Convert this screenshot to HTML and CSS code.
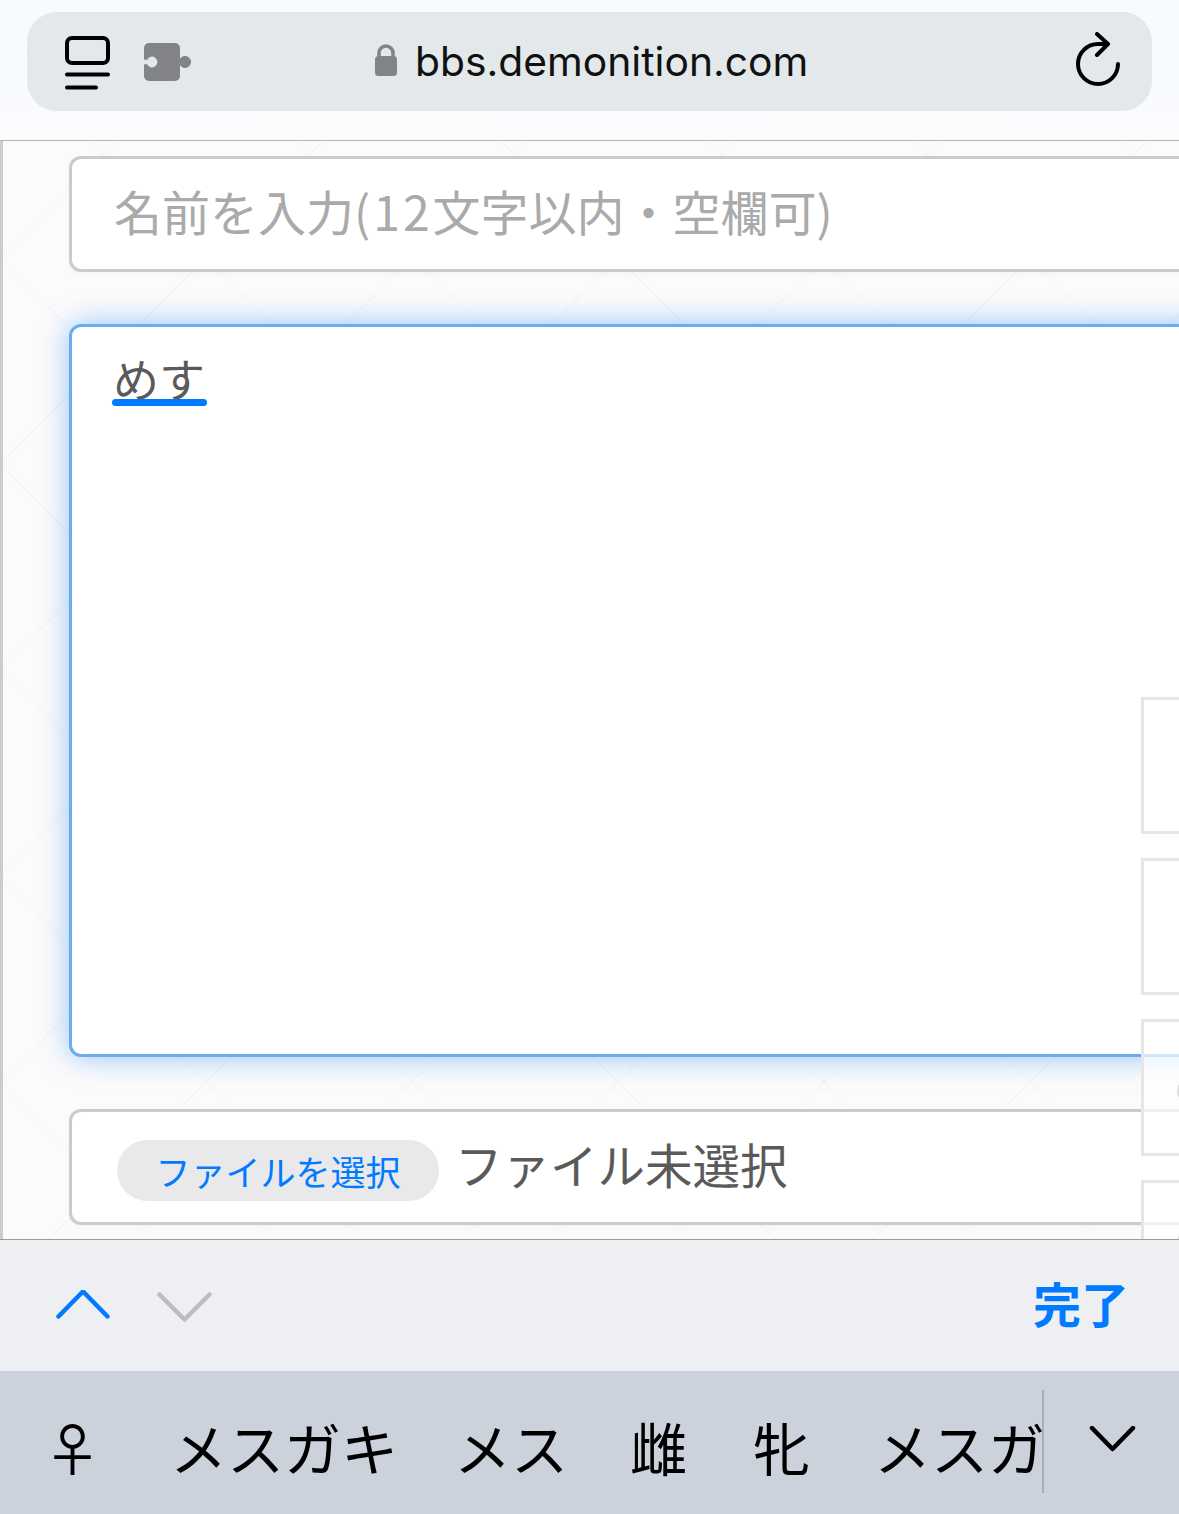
FILE: index.html
```html
<!DOCTYPE html>
<html lang="ja">

<head>
    <meta charset="UTF-8">
    <meta name="viewport" content="width=device-width, initial-scale=1.0">
    <title>bbs.demonition.com</title>
    <link rel="stylesheet" href="styles.css">
</head>

<body>
    <header class="browser-bar">
        <div class="address-pill">
            <svg class="icon-tabs" width="45" height="54" viewBox="0 0 45 54">
                <rect x="2" y="2" width="41" height="25" rx="5" fill="none" stroke="#000" stroke-width="4" />
                <path d="M2 38.500H43M2 51.500H31" fill="none" stroke="#000" stroke-width="4" stroke-linecap="round" />
            </svg>
            <svg class="icon-puzzle" width="48" height="38" viewBox="0 0 48 38">
                <path fill="#828387" d="M5 0H31a5 5 0 0 1 5 5V15.700a6 6 0 1 1 0 6.600V33a5 5 0 0 1-5 5H5a5 5 0 0 1-5-5V21.500L3 21a5.400 5.400 0 1 0 0-4L0 16.500V5a5 5 0 0 1 5-5Z" />
            </svg>
            <div class="address">
                <svg class="icon-lock" width="24" height="33" viewBox="0 0 24 33">
                    <path d="M5 15V10a7 7 0 0 1 14 0v5" fill="none" stroke="#828387" stroke-width="3.500" />
                    <rect x="1" y="13" width="22" height="20" rx="3.500" fill="#828387" />
                </svg>
                <span class="url">bbs.demonition.com</span>
            </div>
            <svg class="icon-reload" width="48" height="56" viewBox="0 0 48 56">
                <path d="M45 32a20 20 0 1 1-20-20h9" fill="none" stroke="#000" stroke-width="4" stroke-linecap="round" />
                <path d="M24 2 35 12 24 23" fill="none" stroke="#000" stroke-width="4" stroke-linecap="round" stroke-linejoin="round" />
            </svg>
        </div>
    </header>

    <main class="page">
        <div class="field name-field">
            <span class="placeholder">名前を入力<span class="digits">(12</span>文字以内・空欄可)</span>
        </div>
        <div class="field message-field">
            <span class="composing">めす</span>
        </div>
        <div class="field file-field">
            <span class="file-btn">ファイルを選択</span>
            <span class="file-name">ファイル未選択</span>
        </div>

        <div class="side-thumb thumb-1"></div>
        <div class="side-thumb thumb-2"></div>
        <div class="side-thumb thumb-3"></div>
        <div class="side-thumb thumb-4"></div>
    </main>

    <div class="form-bar">
        <div class="form-arrows">
            <svg width="56" height="32" viewBox="0 0 56 32">
                <path d="M3.500 26.500 28 1.500 52.500 26.500" fill="none" stroke="#007aff" stroke-width="4.500" stroke-linecap="round" stroke-linejoin="round" />
            </svg>
            <svg width="56" height="32" viewBox="0 0 56 32">
                <path d="M2.500 4.500 27.500 29.500 52.500 4.500" fill="none" stroke="#bdbdbd" stroke-width="4.500" stroke-linecap="round" stroke-linejoin="round" />
            </svg>
        </div>
        <span class="done">完了</span>
    </div>

    <div class="candidates-bar">
        <div class="candidates">
            <span class="candidate symbol">♀</span>
            <span class="candidate kana-first">メスガキ</span>
            <span class="candidate kana-short">メス</span>
            <span class="candidate">雌</span>
            <span class="candidate kanji-second">牝</span>
            <span class="candidate kana-last">メスガ</span>
        </div>
        <div class="expand">
            <svg width="48" height="26" viewBox="0 0 48 26">
                <path d="M4 2 24.500 23 45 2" fill="none" stroke="#000" stroke-width="4.500" stroke-linecap="round" stroke-linejoin="round" />
            </svg>
        </div>
    </div>
</body>

</html>
```

FILE: styles.css
```css
body {
    margin: 0;
    width: 1179px;
    height: 1514px;
    overflow: hidden;
    display: flex;
    flex-direction: column;
    font-family: "Noto Sans CJK JP", "Noto Sans", sans-serif;
}

.browser-bar {
    height: 141px;
    flex-shrink: 0;
    box-sizing: border-box;
    padding: 12px 27px 0;
    background: linear-gradient(#f6fbff, #fafbfd);
    border-bottom: 1px solid #b5b5b5;
}

.address-pill {
    width: 1125px;
    height: 99px;
    box-sizing: border-box;
    padding: 24px 31px 0 38px;
    background-color: #e3e8eb;
    border-radius: 30px;
    display: flex;
    align-items: flex-start;
}

.icon-puzzle {
    margin: 7px 0 0 34px;
}

.address {
    flex: 1;
    display: flex;
    align-items: center;
    gap: 17px;
    padding-left: 182px;
    height: 50px;
}

.icon-lock {
    margin-top: -3px;
}

.url {
    font-family: "Inter", sans-serif;
    font-size: 40.800px;
    color: #111;
}

.icon-reload {
    margin-top: -4px;
}

.page {
    position: relative;
    height: 1098px;
    flex-shrink: 0;
    box-sizing: border-box;
    overflow: hidden;
    padding: 15px 0 0 66px;
    border-left: 3px solid #cccccc;
    display: flex;
    flex-direction: column;
    gap: 52px;
    background-color: #fcfbfb;
    background-image:
        linear-gradient(45deg, transparent calc(50% - 1px), #f5f4f4 50%, transparent calc(50% + 1px)),
        linear-gradient(-45deg, transparent calc(50% - 1px), #f5f4f4 50%, transparent calc(50% + 1px));
    background-size: 206px 206px;
    background-position: -3px -89px;
}

.field {
    width: 1200px;
    box-sizing: border-box;
    flex-shrink: 0;
    background-color: #fff;
    border: 3px solid #cbcbcb;
    border-radius: 12px;
    box-shadow: 0 2px 4px rgba(0, 0, 0, 0.03);
    display: flex;
    align-items: center;
    padding-left: 42px;
}

.name-field {
    height: 116px;
}

.placeholder {
    font-size: 48px;
    font-weight: 400;
    line-height: 62px;
    margin-bottom: 8px;
    color: #aaaaaa;
    white-space: nowrap;
}

.digits {
    letter-spacing: 3px;
}

.message-field {
    height: 733px;
    align-items: flex-start;
    border-color: #66aeee;
    box-shadow: 0 0 30px rgba(0, 122, 255, 0.42);
    padding-left: 41px;
    padding-top: 20px;
}

.composing {
    position: relative;
    font-size: 46px;
    font-weight: 400;
    line-height: 60px;
    color: #5a5a5a;
}

.composing::after {
    content: "";
    position: absolute;
    left: -1px;
    right: -2px;
    bottom: 1px;
    height: 7px;
    border-radius: 4px;
    background-color: #007aff;
}

.file-field {
    height: 116px;
    gap: 16px;
    padding-left: 45px;
}

.file-btn {
    width: 322px;
    height: 61px;
    margin-top: 6px;
    border-radius: 31px;
    background-color: #e9e9eb;
    color: #007aff;
    font-size: 35px;
    font-weight: 400;
    display: flex;
    align-items: center;
    justify-content: center;
}

.file-name {
    font-size: 47.500px;
    font-weight: 400;
    line-height: 62px;
    margin-bottom: 6px;
    color: #5a5a5a;
}

/* thumbnails floating over the right edge */
.side-thumb {
    position: absolute;
    left: 1138px;
    width: 60px;
    height: 137px;
    box-sizing: border-box;
    border: 3px solid #e6e6e6;
    background-color: rgba(255, 255, 255, 0.7);
}

.thumb-3::after,
.thumb-4::after {
    content: "";
    position: absolute;
    left: 33px;
    top: 55px;
    width: 30px;
    height: 28px;
    box-sizing: border-box;
    border-left: 3px solid #dddddd;
    border-radius: 50%;
}

.thumb-4::after {
    top: 45px;
}

.thumb-1 {
    top: 556px;
}

.thumb-2 {
    top: 717px;
}

.thumb-3 {
    top: 878px;
}

.thumb-4 {
    top: 1039px;
}

.form-bar {
    height: 132px;
    flex-shrink: 0;
    box-sizing: border-box;
    border-top: 1px solid #9a9a9a;
    background-color: #edeff3;
    display: flex;
    justify-content: space-between;
    align-items: center;
    padding: 0 50px 0 55px;
}

.form-arrows {
    display: flex;
    gap: 46px;
}

.done {
    font-size: 48px;
    font-weight: 700;
    line-height: 60px;
    margin-bottom: 8px;
    color: #007aff;
}

.candidates-bar {
    flex: 1;
    display: flex;
    background-color: #cbd2dc;
}

.candidates {
    width: 1044px;
    height: 103px;
    margin-top: 19px;
    box-sizing: border-box;
    border-right: 2px solid #a9aeb6;
    padding: 8px 0 0 44px;
    display: flex;
    align-items: center;
    gap: 62px;
    font-size: 57px;
    color: #000;
}

.candidate {
    flex-shrink: 0;
    white-space: nowrap;
}

.symbol {
    margin-right: 7px;
}

.kana-short {
    margin-left: -6px;
}

.kanji-second {
    margin-left: 4px;
}

.kana-last {
    margin-left: 2px;
}

.expand {
    flex: 1;
    display: flex;
    justify-content: center;
    padding-top: 55px;
}
```
